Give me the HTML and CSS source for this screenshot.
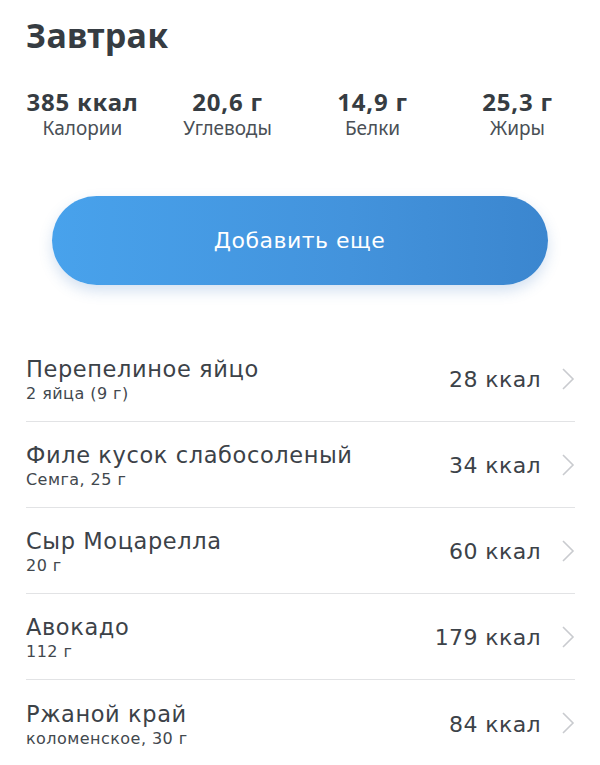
FILE: index.html
```html
<!DOCTYPE html>
<html lang="ru">
<head>
<meta charset="utf-8">
<link rel="stylesheet" href="styles.css">
</head>
<body>
<div class="page">
  <h1 class="title">Завтрак</h1>
  <div class="stats">
    <div class="stat"><div class="val">385 ккал</div><div class="lbl">Калории</div></div>
    <div class="stat"><div class="val">20,6 г</div><div class="lbl">Углеводы</div></div>
    <div class="stat"><div class="val">14,9 г</div><div class="lbl">Белки</div></div>
    <div class="stat"><div class="val">25,3 г</div><div class="lbl">Жиры</div></div>
  </div>
  <div class="btn-wrap"><button class="btn">Добавить еще</button></div>
  <ul class="list">
    <li class="row"><div class="info"><div class="name">Перепелиное яйцо</div><div class="sub">2 яйца (9 г)</div></div><div class="kcal">28 ккал</div><svg class="chev" viewBox="0 0 14 24"><path d="M2 2 L12 12 L2 22"/></svg></li>
    <li class="row"><div class="info"><div class="name">Филе кусок слабосоленый</div><div class="sub">Семга, 25 г</div></div><div class="kcal">34 ккал</div><svg class="chev" viewBox="0 0 14 24"><path d="M2 2 L12 12 L2 22"/></svg></li>
    <li class="row"><div class="info"><div class="name">Сыр Моцарелла</div><div class="sub">20 г</div></div><div class="kcal">60 ккал</div><svg class="chev" viewBox="0 0 14 24"><path d="M2 2 L12 12 L2 22"/></svg></li>
    <li class="row"><div class="info"><div class="name">Авокадо</div><div class="sub">112 г</div></div><div class="kcal">179 ккал</div><svg class="chev" viewBox="0 0 14 24"><path d="M2 2 L12 12 L2 22"/></svg></li>
    <li class="row"><div class="info"><div class="name">Ржаной край</div><div class="sub">коломенское, 30 г</div></div><div class="kcal">84 ккал</div><svg class="chev" viewBox="0 0 14 24"><path d="M2 2 L12 12 L2 22"/></svg></li>
  </ul>
</div>
</body>
</html>
```
FILE: styles.css
```css
* { box-sizing: border-box; }
html, body { margin: 0; padding: 0; background: #fff; }
body { font-family: "DejaVu Sans", "Noto Sans", sans-serif; color: #3c4248; overflow: hidden; }
.page { width: 600px; height: 765px; padding: 0 25px 0 26px; }
.title { margin: 0; padding-top: 12px; font-family: "Noto Sans", sans-serif; font-size: 34px; line-height: 46px; font-weight: 700; color: #363c42; letter-spacing: 0.3px; }
.stats { display: grid; grid-template-columns: repeat(4, 145px); margin: 32px 0 0 -16px; }
.stat { display: flex; flex-direction: column; align-items: center; }
.val { font-family: "Noto Sans", sans-serif; font-size: 24px; line-height: 23px; font-weight: 700; color: #363c42; letter-spacing: 0.8px; }
.lbl { font-family: "Noto Sans", sans-serif; font-size: 19px; line-height: 20px; color: #4a5056; padding-top: 5px; }
.btn-wrap { display: flex; justify-content: center; margin-top: 58px; }
.btn { width: 496px; height: 89px; border: none; border-radius: 45px; background: linear-gradient(90deg, #48a2ec 0%, #4393dc 60%, #3b86cf 100%); color: #fff; font-family: inherit; font-size: 22px; letter-spacing: 0.5px; box-shadow: 0 6px 14px rgba(60, 120, 190, 0.22); margin-left: -2px; }
.list { list-style: none; margin: 51px 0 0; padding: 0; }
.row { display: flex; align-items: center; height: 86px; border-bottom: 1px solid #e2e3e5; }
.row:last-child { border-bottom: none; }
.info { flex: 1; display: flex; flex-direction: column; padding-top: 4px; }
.name { font-size: 22.5px; line-height: 27px; color: #3c4248; letter-spacing: 0.6px; }
.sub { font-size: 16px; line-height: 22px; color: #42484e; letter-spacing: 0.45px; }
.kcal { font-size: 22px; line-height: 27px; color: #3c4248; margin-right: 20px; padding-top: 2px; letter-spacing: 0.4px; }
.chev { width: 14px; height: 24px; fill: none; stroke: #c9cbcf; stroke-width: 1.6; }
```
